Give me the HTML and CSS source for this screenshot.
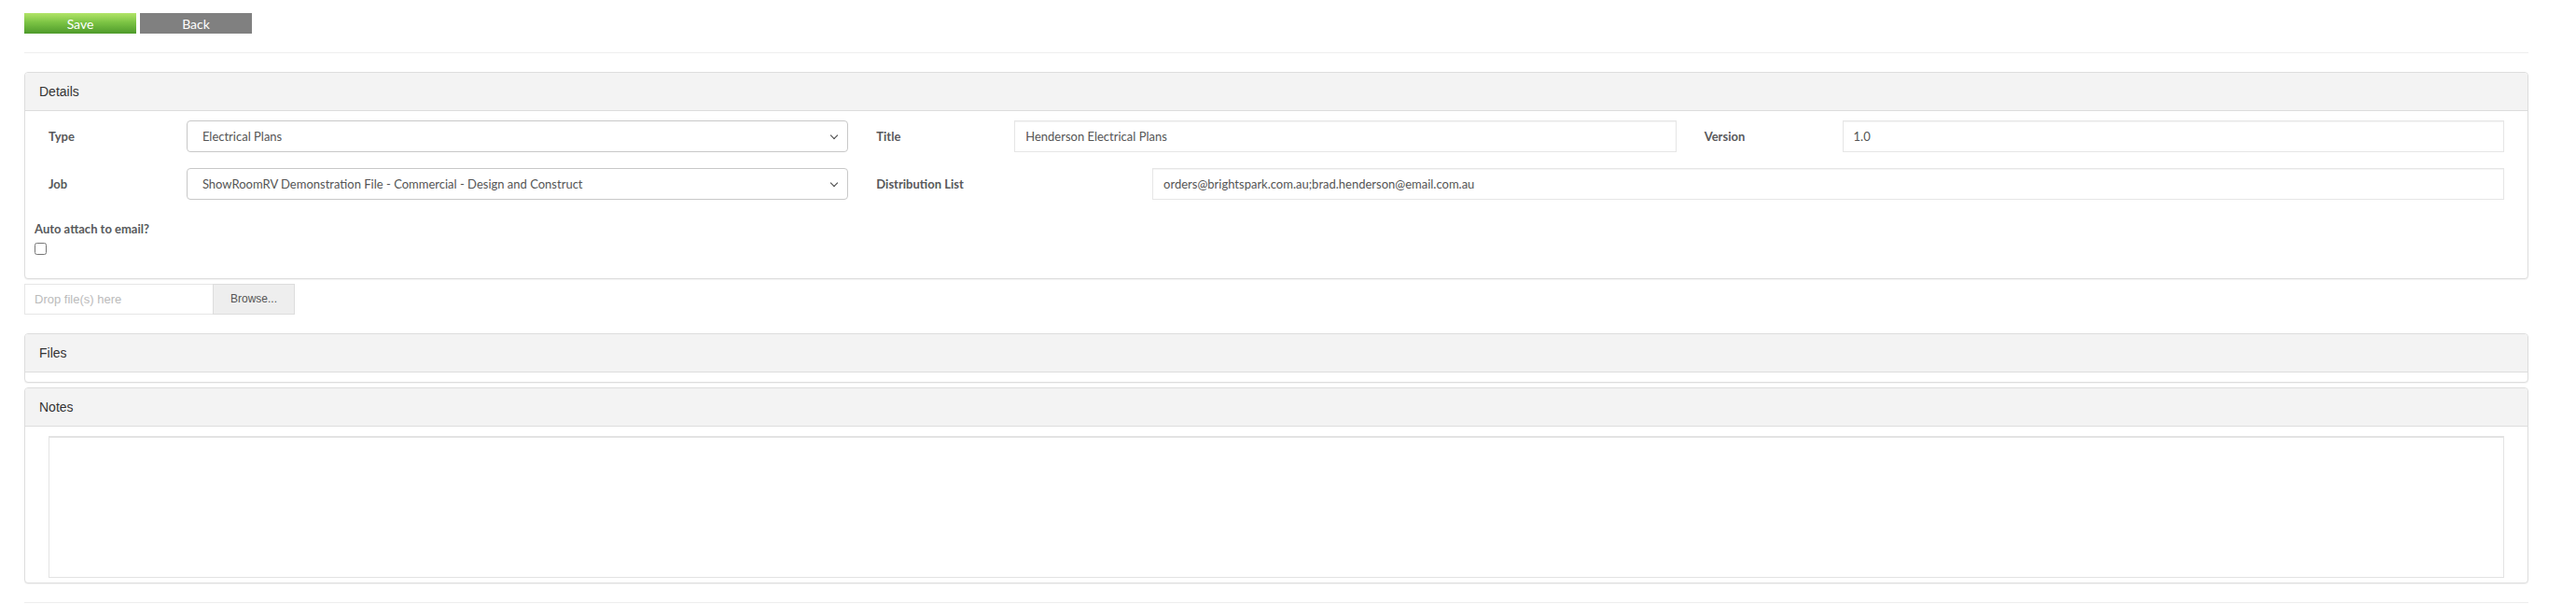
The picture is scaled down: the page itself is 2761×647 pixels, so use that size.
FILE: index.html
```html
<!doctype html>
<html>
<head>
<title>Document</title>
<meta charset="utf-8">
<link rel="stylesheet" href="styles.css">
</head>
<body>
<div class="page">
	<div class="actions">
		<button class="btn btn_save" type="button">Save</button>
		<button class="btn btn_back" type="button">Back</button>
	</div>
	<hr class="rule">

	<div class="panel">
		<div class="panel_head">Details</div>
		<div class="panel_body">
			<div class="form_row">
				<div class="field">
					<label class="field_label">Type</label>
					<span class="select_wrap">
						<select class="select">
							<option>Electrical Plans</option>
						</select>
					</span>
				</div>
				<div class="field">
					<label class="field_label">Title</label>
					<input class="input" type="text" value="Henderson Electrical Plans">
				</div>
				<div class="field">
					<label class="field_label">Version</label>
					<input class="input" type="text" value="1.0">
				</div>
			</div>
			<div class="form_row">
				<div class="field">
					<label class="field_label">Job</label>
					<span class="select_wrap">
						<select class="select">
							<option>ShowRoomRV Demonstration File - Commercial - Design and Construct</option>
						</select>
					</span>
				</div>
				<div class="field field_wide">
					<label class="field_label">Distribution List</label>
					<input class="input" type="text" value="orders@brightspark.com.au;brad.henderson@email.com.au">
				</div>
			</div>
			<div class="check_group">
				<label class="check_label">Auto attach to email?</label>
				<input class="check" type="checkbox">
			</div>
		</div>
	</div>

	<div class="upload">
		<input class="upload_drop" type="text" placeholder="Drop file(s) here">
		<span class="upload_btn">Browse...</span>
	</div>

	<div class="panel">
		<div class="panel_head">Files</div>
		<div class="panel_body panel_body_empty"></div>
	</div>

	<div class="panel">
		<div class="panel_head">Notes</div>
		<div class="panel_body panel_body_notes">
			<textarea class="notes"></textarea>
		</div>
	</div>
	<hr class="rule">
</div>
</body>
</html>
```

FILE: styles.css
```css
html,body{margin:0;padding:0;background:#fff;}
body{font:14px "Liberation Sans",Arial,sans-serif;color:#333;}

.page{padding:14px 51px 0 26px;}

/* buttons */
.actions{display:flex;gap:4px;}
.btn{width:120px;height:22px;border:0;margin:0;padding:0;font:14px Lato,"Liberation Sans",sans-serif;color:#fff;cursor:pointer;}
.btn_save{background:linear-gradient(#b2e468,#7cc444 45%,#4e9a2b);}
.btn_back{background:#808080;}

.rule{border:0;border-top:1px solid #eee;margin:20px 0;height:0;}

/* panels */
.panel{border:1px solid #ddd;border-radius:4px;margin-bottom:5px;background:#fff;box-shadow:0 1px 1px rgba(0,0,0,.05);}
.panel_head{height:40px;line-height:40px;padding:0 15px;background:#f3f3f3;border-bottom:1px solid #ddd;border-radius:3px 3px 0 0;font-size:14px;color:#333;}
.panel_body{padding:10px;}
.panel_body_empty{padding:5px 10px;}
.panel_body_notes{padding:10px 10px 5px;}

/* form */
.form_row{display:grid;grid-template-columns:repeat(3,1fr);margin-bottom:17px;}
.field{padding:0 15px;display:grid;grid-template-columns:calc((100% + 30px) / 6) 1fr;align-items:center;}
.field_wide{grid-column:span 2;}
.field_label,.check_label{font:bold 13px Lato,"Liberation Sans",sans-serif;color:#58595b;}

.input,.select{box-sizing:border-box;width:100%;height:34px;margin:0;font:13px Lato,"Liberation Sans",sans-serif;color:#555;background:#fff;}
.input{border:1px solid #e6e6e6;padding:0 11px;box-shadow:inset 0 1px 1px rgba(0,0,0,.05);outline:0;}
.select_wrap{position:relative;display:block;}
.select{appearance:none;-webkit-appearance:none;border:1px solid #c8c8c8;border-radius:4px;padding:0 30px 0 16px;}
.select_wrap::after{content:"";position:absolute;right:12px;top:13px;width:5px;height:5px;border-right:1.6px solid #444;border-bottom:1.6px solid #444;transform:rotate(45deg);pointer-events:none;}

.check_group{padding-top:4px;margin-bottom:15px;}
.check_label{display:block;line-height:20px;margin-bottom:5px;}
.check{display:block;width:13px;height:13px;margin:0;}

/* upload */
.upload{display:flex;height:33px;margin-bottom:20px;}
.upload_drop{box-sizing:border-box;width:202px;height:33px;margin:0;border:1px solid #e6e6e6;border-right:0;padding:0 10px;font:13px "Liberation Sans",Arial,sans-serif;color:#555;outline:0;}
.upload_drop::placeholder{color:#bbb;}
.upload_btn{box-sizing:border-box;width:88px;height:33px;text-align:center;background:#eee;border:1px solid #ddd;font:12px/31px "Liberation Sans",Arial,sans-serif;color:#555;}

.notes{display:block;box-sizing:border-box;width:calc(100% - 30px);height:152px;margin:0 15px;border:1px solid #e3e3e3;border-top-width:2px;resize:none;outline:0;}
```
